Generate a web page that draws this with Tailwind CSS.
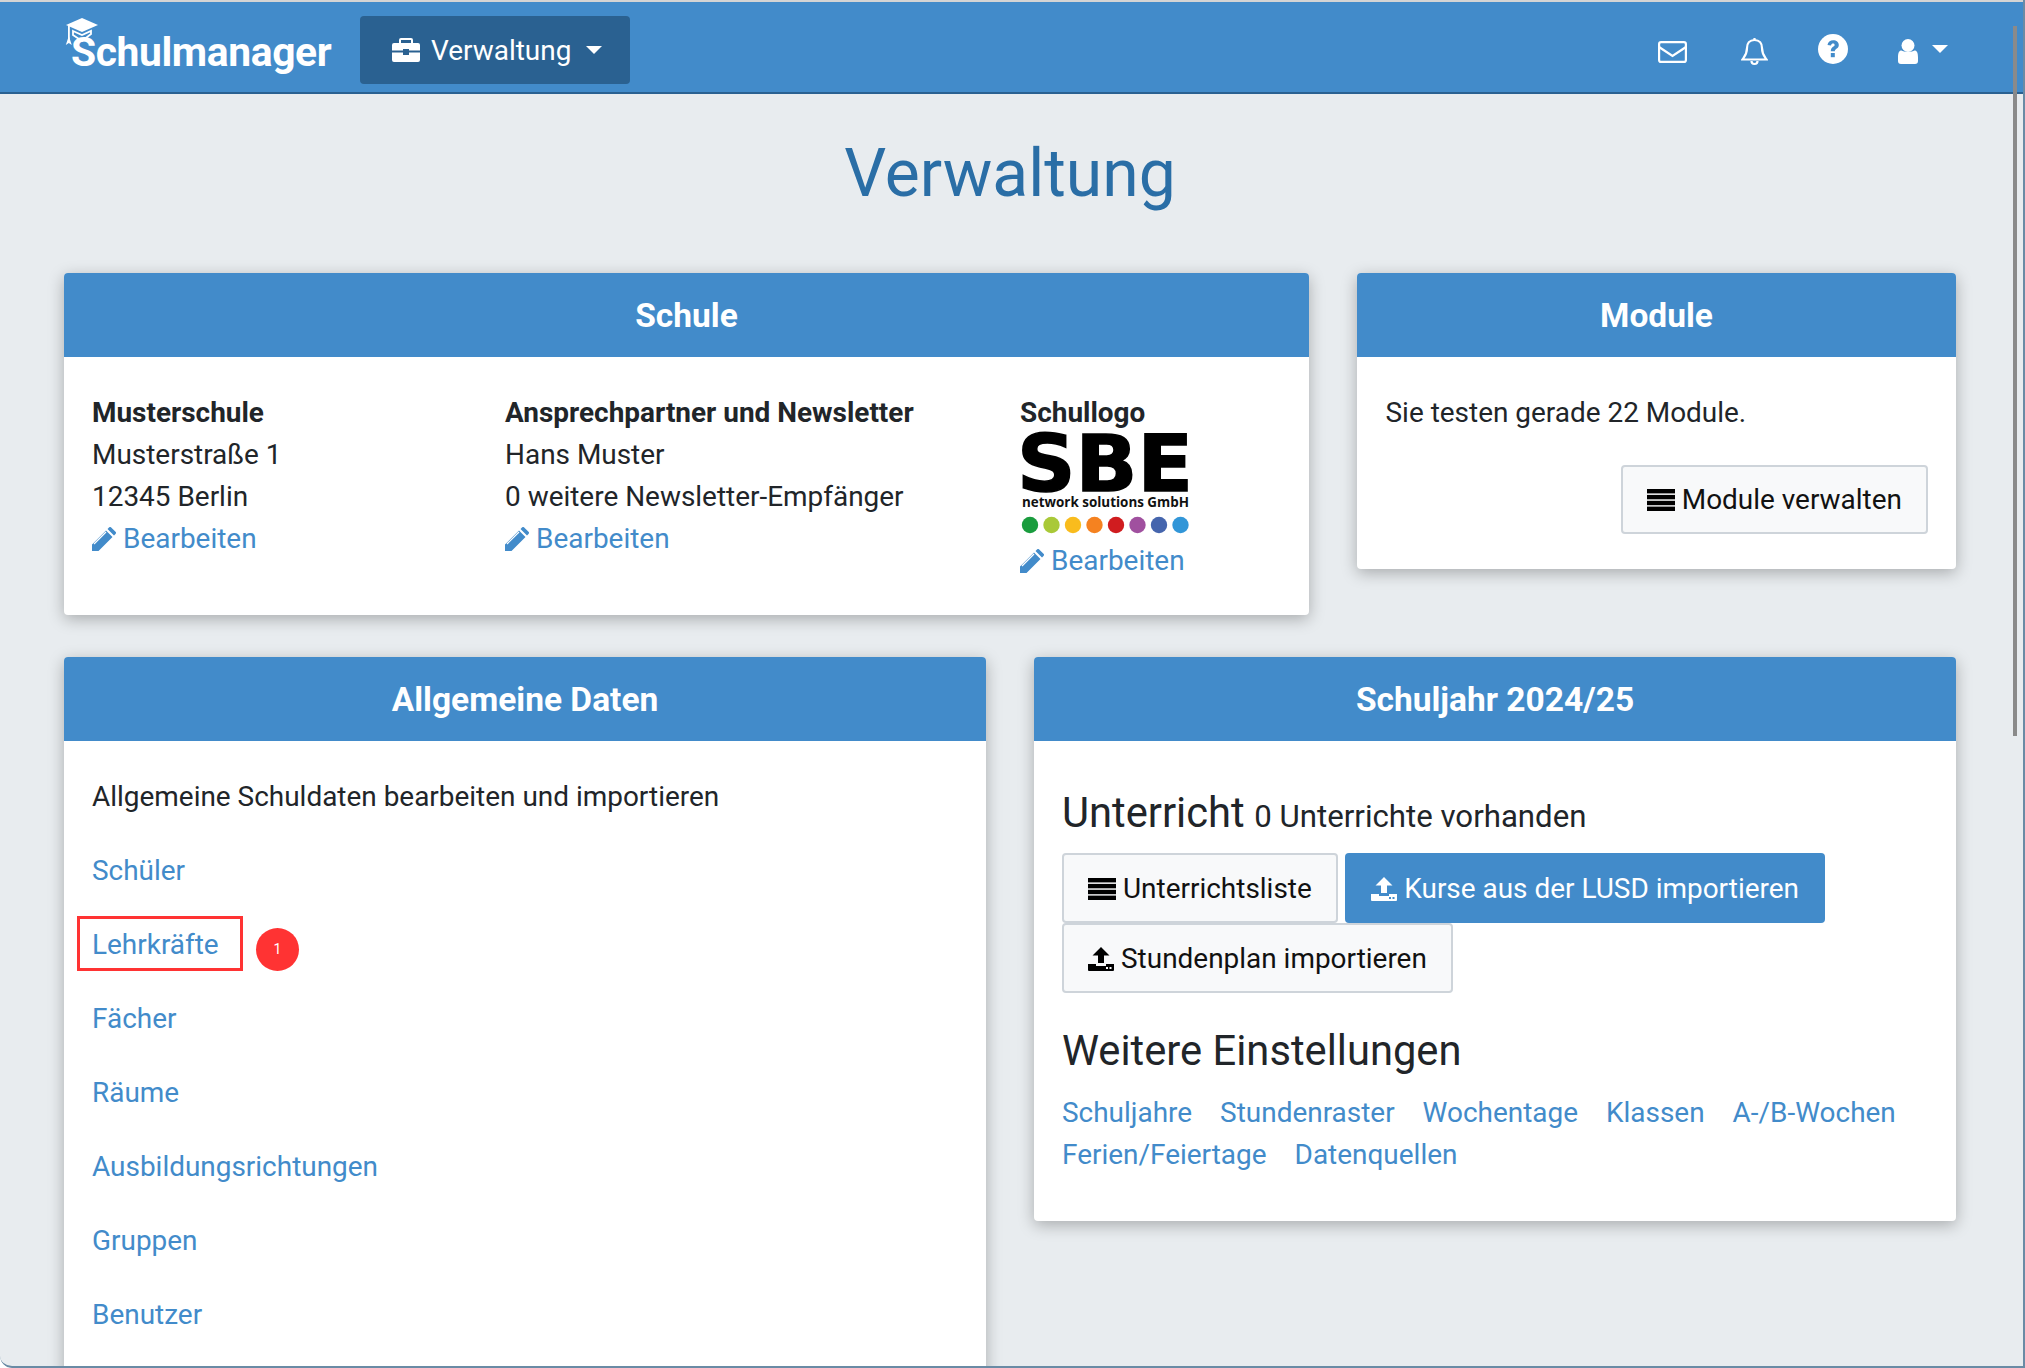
<!DOCTYPE html>
<html lang="de">
<head>
<meta charset="utf-8">
<title>Verwaltung</title>
<script src="https://cdn.jsdelivr.net/npm/@tailwindcss/browser@4"></script>
</head>
<body class="m-0 bg-white">
<div class="relative w-[2025px] h-[1368px] overflow-hidden rounded-bl-[12px] bg-[#e8ecef] font-['Roboto',sans-serif] text-[27.95px] leading-[42px] text-[#212529]">

  <!-- navbar -->
  <header class="h-[94px] pt-[6px] border-t-2 border-t-[#d4d4d4] border-b-2 border-b-[#2a6191] bg-[#428bca] flex items-center pl-[64px] pr-[77px] text-white">
    <div class="relative w-[296px] h-full">
      <svg class="absolute left-[1px] top-[10px] w-[34px] h-[28px]" viewBox="0 0 34 28" fill="white" preserveAspectRatio="none"><polygon points="17,0 33,7 17,14 1,7"/><path d="M8 13l9 4 9-4v3l-9 7-9-6z" fill="none" stroke="white" stroke-width="1.800"/><rect x="3" y="8" width="1.800" height="13"/><path d="M3.800 18l3 9-3-2-3 2z"/></svg>
      <span class="absolute left-[7px] top-[19px] text-[40.8px] leading-[50px] font-bold tracking-[-0.4px]">Schulmanager</span>
    </div>
    <div class="h-[68px] w-[270px] rounded-[4px] bg-[#2a6191] flex items-center pl-[32px]">
      <svg class="w-[28px] h-[24px] mr-[11px]" viewBox="0 0 28 24" fill="white"><path d="M9 0h10a2 2 0 0 1 2 2v3h5a2 2 0 0 1 2 2v5.500H17V11h-6v1.500H0V7a2 2 0 0 1 2-2h5V2a2 2 0 0 1 2-2zm0 2v3h10V2z"/><path d="M0 14.500h11V17h6v-2.500h11V22a2 2 0 0 1-2 2H2a2 2 0 0 1-2-2z"/></svg>
      <span class="mt-[2px]">Verwaltung</span>
      <svg class="w-[16px] h-[8px] ml-[15px]" viewBox="0 0 16 8" fill="white"><polygon points="0,0 16,0 8,8"/></svg>
    </div>
    <div class="ml-auto flex items-center">
      <svg class="w-[29px] h-[22px] mt-[4px]" viewBox="0 0 29 22" fill="none" stroke="white" stroke-width="2.200"><rect x="1.100" y="1.100" width="26.800" height="19.800" rx="2"/><path d="M1 6l13.500 9L28 6"/></svg>
      <svg class="w-[27px] h-[29px] ml-[54px] mt-[2px]" viewBox="0 0 27 29" fill="none" stroke="white" stroke-width="2.200"><path d="M13.500 3c5 0 7.500 3.500 7.500 8 0 6 2 8 4.500 11.500h-24C4 19 6 17 6 11c0-4.500 2.500-8 7.500-8z"/><path d="M13.500 1v2M10.500 24a3 3 0 0 0 6 0"/></svg>
      <svg class="w-[30px] h-[30px] ml-[50px] mt-[-2px]" viewBox="0 0 30 30"><circle cx="15" cy="15" r="15" fill="white"/><path d="M9.500 11c.4-3 2.700-4.700 5.700-4.700 3.200 0 5.600 2 5.600 4.700 0 3.700-4 3.600-4 6.200h-4c0-4.500 3.800-4.300 3.800-6.200 0-.9-.7-1.400-1.600-1.400-1 0-1.600.6-2 1.900z" fill="#428bca"/><rect x="12.800" y="19" width="4" height="4.200" fill="#428bca"/></svg>
      <svg class="w-[20px] h-[25px] ml-[50px] mt-[2px]" viewBox="0 0 20 25" fill="white"><circle cx="10" cy="6.500" r="6.500"/><path d="M3.500 11.500c2 1.800 11 1.800 13 0 2.500 0 3.500 2.500 3.500 7V22a3 3 0 0 1-3 3H3a3 3 0 0 1-3-3v-3.500c0-4.500 1-7 3.500-7z"/></svg>
      <svg class="w-[16px] h-[8px] ml-[14px] mt-[-3px]" viewBox="0 0 16 8" fill="white"><polygon points="0,0 16,0 8,8"/></svg>
    </div>
  </header>

  <!-- content -->
  <main class="px-[64px] w-[1956px] box-content">
    <div class="w-[1892px]">
      <h1 class="h-[179px] pt-[38px] text-center text-[66px] leading-[84px] font-normal text-[#2a6ea6]">Verwaltung</h1>

      <div class="flex gap-[48px] items-start">
        <section class="w-[1245px] h-[342px] bg-white rounded-[4px] shadow-[0_4px_16px_rgba(0,0,0,0.28)]">
          <h2 class="h-[84px] pt-[1px] rounded-t-[4px] bg-[#428bca] text-white text-[33.5px] font-bold flex items-center justify-center">Schule</h2>
          <div class="pt-[35px] px-[28px] grid grid-cols-[413px_515px_1fr]">
            <div>
              <p class="font-bold">Musterschule</p>
              <p>Musterstraße 1</p>
              <p>12345 Berlin</p>
              <a class="flex items-center text-[#428bca]"><svg class="w-[24px] h-[24px] mr-[7px]" viewBox="0 0 24 24" fill="#428bca"><path d="M0 24v-6.500L14 3.500l6.500 6.500L6.500 24zM15.500 2l1.500-1.500a1.500 1.500 0 0 1 2.200 0l4.300 4.300a1.500 1.500 0 0 1 0 2.200L22 8.500z"/><path d="M2 17L14 5" stroke="white" stroke-width="1.200"/></svg>Bearbeiten</a>
            </div>
            <div>
              <p class="font-bold">Ansprechpartner und Newsletter</p>
              <p>Hans Muster</p>
              <p>0 weitere Newsletter-Empfänger</p>
              <a class="flex items-center text-[#428bca]"><svg class="w-[24px] h-[24px] mr-[7px]" viewBox="0 0 24 24" fill="#428bca"><path d="M0 24v-6.500L14 3.500l6.500 6.500L6.500 24zM15.500 2l1.500-1.500a1.500 1.500 0 0 1 2.200 0l4.300 4.300a1.500 1.500 0 0 1 0 2.200L22 8.500z"/><path d="M2 17L14 5" stroke="white" stroke-width="1.200"/></svg>Bearbeiten</a>
            </div>
            <div>
              <p class="font-bold">Schullogo</p>
              <svg class="block w-[170px] h-[103px] mt-[-1px] overflow-visible" viewBox="0 0 170 103">
                <text x="-3" y="58" textLength="176" lengthAdjust="spacingAndGlyphs" font-family="'DejaVu Sans'" font-weight="bold" font-size="79" fill="black" stroke="black" stroke-width="1.500">SBE</text>
                <text x="2" y="74" textLength="167" lengthAdjust="spacingAndGlyphs" font-family="'Open Sans'" font-weight="bold" font-size="14" fill="#111">network solutions GmbH</text>
                <circle cx="10" cy="92" r="8.200" fill="#1a9c3e"/><circle cx="31.500" cy="92" r="8.200" fill="#a9c938"/><circle cx="53" cy="92" r="8.200" fill="#f9bc1d"/><circle cx="74.500" cy="92" r="8.200" fill="#f58220"/><circle cx="96" cy="92" r="8.200" fill="#d01c1f"/><circle cx="117.500" cy="92" r="8.200" fill="#a0509f"/><circle cx="139" cy="92" r="8.200" fill="#4565ad"/><circle cx="160.500" cy="92" r="8.200" fill="#3296d8"/>
              </svg>
              <a class="flex items-center text-[#428bca] mt-[4px]"><svg class="w-[24px] h-[24px] mr-[7px]" viewBox="0 0 24 24" fill="#428bca"><path d="M0 24v-6.500L14 3.500l6.500 6.500L6.500 24zM15.500 2l1.500-1.500a1.500 1.500 0 0 1 2.200 0l4.300 4.300a1.500 1.500 0 0 1 0 2.200L22 8.500z"/><path d="M2 17L14 5" stroke="white" stroke-width="1.200"/></svg>Bearbeiten</a>
            </div>
          </div>
        </section>

        <section class="w-[599px] h-[296px] bg-white rounded-[4px] shadow-[0_4px_16px_rgba(0,0,0,0.28)]">
          <h2 class="h-[84px] pt-[1px] rounded-t-[4px] bg-[#428bca] text-white text-[33.5px] font-bold flex items-center justify-center">Module</h2>
          <div class="pt-[35px] pl-[28.500px] pr-[28px]">
            <p>Sie testen gerade 22 Module.</p>
            <div class="flex justify-end mt-[31px]">
              <a class="h-[69px] pt-[1px] px-[24px] flex items-center rounded-[4px] border-2 border-[#ced4da] bg-[#f8f9fa] text-[#111]">
                <svg class="w-[28px] h-[22px] mr-[7px]" viewBox="0 0 28 22" fill="black"><rect width="28" height="4.400"/><rect y="5.900" width="28" height="4.400"/><rect y="11.800" width="28" height="4.400"/><rect y="17.600" width="28" height="4.400"/></svg>Module verwalten</a>
            </div>
          </div>
        </section>
      </div>

      <div class="flex gap-[48px] items-start mt-[42px]">
        <section class="relative w-[922px] h-[760px] bg-white rounded-[4px] shadow-[0_4px_16px_rgba(0,0,0,0.28)]">
          <h2 class="h-[84px] pt-[1px] rounded-t-[4px] bg-[#428bca] text-white text-[33.5px] font-bold flex items-center justify-center">Allgemeine Daten</h2>
          <div class="pt-[35px] px-[28px]">
            <p>Allgemeine Schuldaten bearbeiten und importieren</p>
            <ul class="mt-[32px] flex flex-col gap-[32px] text-[#428bca]">
              <li>Schüler</li>
              <li>Lehrkräfte</li>
              <li>Fächer</li>
              <li>Räume</li>
              <li>Ausbildungsrichtungen</li>
              <li>Gruppen</li>
              <li>Benutzer</li>
            </ul>
          </div>
          <div class="absolute left-[13px] top-[259px] w-[166px] h-[55px] border-[3px] border-[#ff3333]"></div>
          <div class="absolute left-[192px] top-[271px] w-[43px] h-[43px] rounded-full bg-[#ff3333] text-white text-[14px] leading-[43px] text-center">1</div>
        </section>

        <section class="w-[922px] h-[564px] bg-white rounded-[4px] shadow-[0_4px_16px_rgba(0,0,0,0.28)]">
          <h2 class="h-[84px] pt-[1px] rounded-t-[4px] bg-[#428bca] text-white text-[33.5px] font-bold flex items-center justify-center">Schuljahr 2024/25</h2>
          <div class="pt-[28px] px-[28px]">
            <p class="h-[84px] pt-[19px] text-[31.2px] leading-[50px]"><span class="text-[41.7px] mr-[2px]">Unterricht</span> 0 Unterrichte vorhanden</p>
            <div class="flex flex-wrap gap-x-[7px] w-[800px]">
              <a class="h-[70px] pt-[1px] px-[24px] flex items-center rounded-[4px] border-2 border-[#ced4da] bg-[#f8f9fa] text-[#111]">
                <svg class="w-[28px] h-[22px] mr-[7px]" viewBox="0 0 28 22" fill="black"><rect width="28" height="4.400"/><rect y="5.900" width="28" height="4.400"/><rect y="11.800" width="28" height="4.400"/><rect y="17.600" width="28" height="4.400"/></svg>Unterrichtsliste</a>
              <a class="h-[70px] pt-[1px] px-[26.500px] flex items-center rounded-[4px] bg-[#428bca] text-white">
                <svg class="w-[26px] h-[24px] mr-[7px]" viewBox="0 0 26 24" fill="white"><path d="M13 0l8.500 8.500H16V16h-6V8.500H4.500z"/><path d="M0 17h8v2h10v-2h8v6a1 1 0 0 1-1 1H1a1 1 0 0 1-1-1z"/><rect x="18" y="20" width="2" height="2" fill="#428bca"/><rect x="21.500" y="20" width="2" height="2" fill="#428bca"/></svg>Kurse aus der LUSD importieren</a>
              <a class="h-[70px] pt-[1px] px-[24px] flex items-center rounded-[4px] border-2 border-[#ced4da] bg-[#f8f9fa] text-[#111]">
                <svg class="w-[26px] h-[24px] mr-[7px]" viewBox="0 0 26 24" fill="black"><path d="M13 0l8.500 8.500H16V16h-6V8.500H4.500z"/><path d="M0 17h8v2h10v-2h8v6a1 1 0 0 1-1 1H1a1 1 0 0 1-1-1z"/><rect x="18" y="20" width="2" height="2" fill="white"/><rect x="21.500" y="20" width="2" height="2" fill="white"/></svg>Stundenplan importieren</a>
            </div>
            <h3 class="mt-[33px] text-[41.7px] leading-[50px] font-normal">Weitere Einstellungen</h3>
            <div class="mt-[16px] flex flex-wrap gap-x-[28px] text-[#428bca]">
              <a>Schuljahre</a><a>Stundenraster</a><a>Wochentage</a><a>Klassen</a><a>A-/B-Wochen</a><a>Ferien/Feiertage</a><a>Datenquellen</a>
            </div>
          </div>
        </section>
      </div>
    </div>
  </main>

  <!-- window chrome -->
  <div class="absolute left-[2013px] top-[26px] w-[4px] h-[710px] bg-[#8a8a8a]"></div>
  <div class="absolute inset-0 rounded-bl-[12px] border-r-2 border-b-2 border-[#6a8ba5] pointer-events-none"></div>
</div>
</body>
</html>
